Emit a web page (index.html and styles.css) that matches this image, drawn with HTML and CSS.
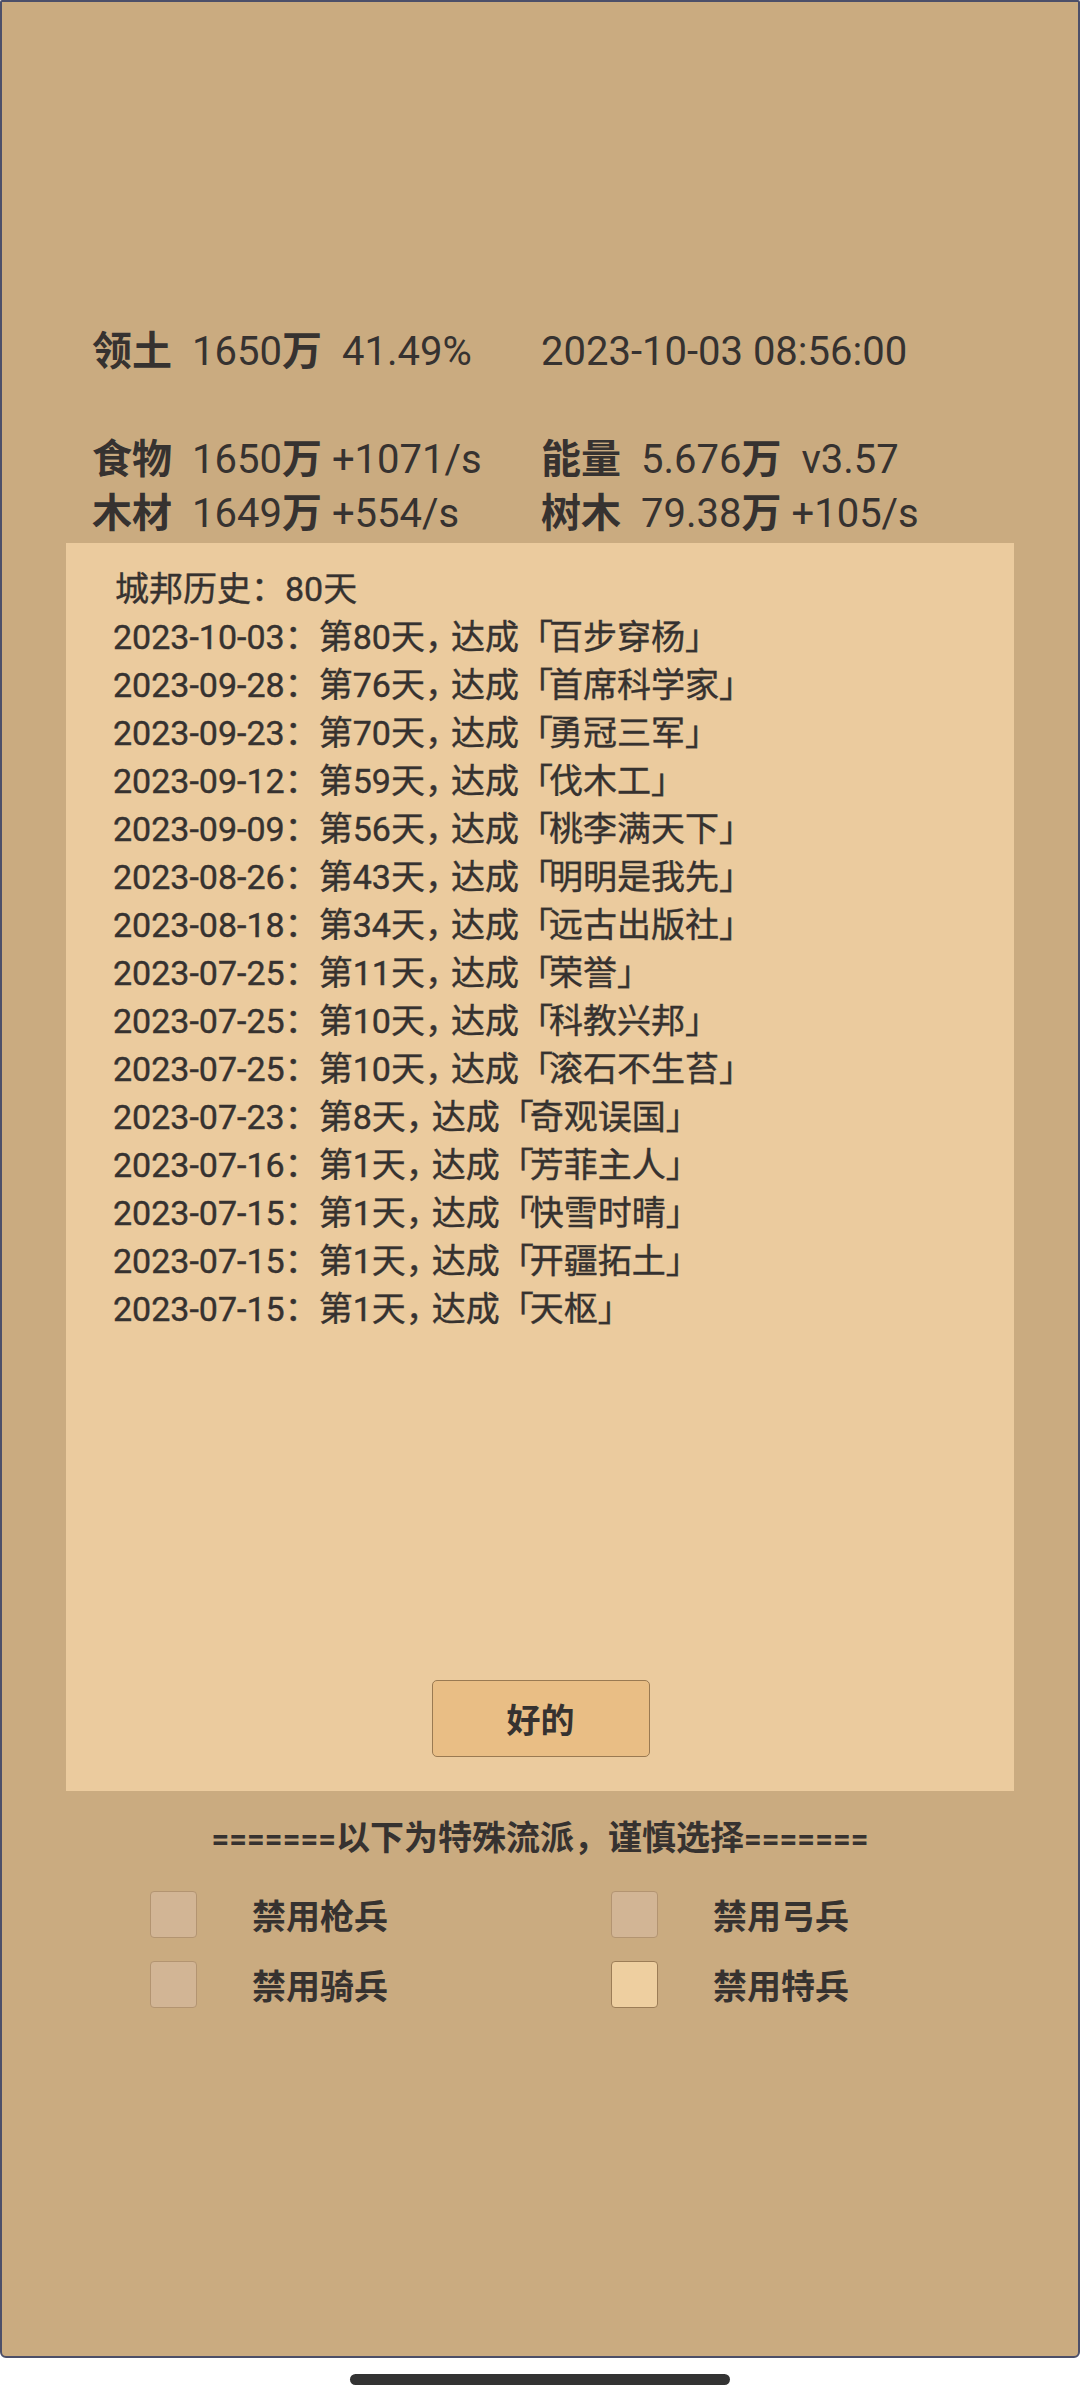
FILE: index.html
```html
<!DOCTYPE html>
<html lang="zh-CN">
<head>
<meta charset="utf-8">
<title>城邦</title>
<link rel="stylesheet" href="styles.css">
</head>
<body>
<div class="screen">
  <div class="frame">
    <div class="stats">
      <div class="row">
        <div class="cell"><span class="lbl">领土</span><span class="val">1650<span class="u">万</span></span><span class="ext wide">41.49%</span></div>
        <div class="cell"><span class="date">2023-10-03 08:56:00</span></div>
      </div>
      <div class="row empty"></div>
      <div class="row">
        <div class="cell"><span class="lbl">食物</span><span class="val">1650<span class="u">万</span></span><span class="ext">+1071/s</span></div>
        <div class="cell"><span class="lbl">能量</span><span class="val">5.676<span class="u">万</span></span><span class="ext wide">v3.57</span></div>
      </div>
      <div class="row">
        <div class="cell"><span class="lbl">木材</span><span class="val">1649<span class="u">万</span></span><span class="ext">+554/s</span></div>
        <div class="cell"><span class="lbl">树木</span><span class="val">79.38<span class="u">万</span></span><span class="ext">+105/s</span></div>
      </div>
    </div>

    <div class="panel">
      <div class="history">
        <div class="line head">城邦历史：80天</div>
        <div class="line">2023-10-03：第80天<span class="cm">，</span>达成<span class="bo">「</span>百步穿杨<span class="bc">」</span></div>
        <div class="line">2023-09-28：第76天<span class="cm">，</span>达成<span class="bo">「</span>首席科学家<span class="bc">」</span></div>
        <div class="line">2023-09-23：第70天<span class="cm">，</span>达成<span class="bo">「</span>勇冠三军<span class="bc">」</span></div>
        <div class="line">2023-09-12：第59天<span class="cm">，</span>达成<span class="bo">「</span>伐木工<span class="bc">」</span></div>
        <div class="line">2023-09-09：第56天<span class="cm">，</span>达成<span class="bo">「</span>桃李满天下<span class="bc">」</span></div>
        <div class="line">2023-08-26：第43天<span class="cm">，</span>达成<span class="bo">「</span>明明是我先<span class="bc">」</span></div>
        <div class="line">2023-08-18：第34天<span class="cm">，</span>达成<span class="bo">「</span>远古出版社<span class="bc">」</span></div>
        <div class="line">2023-07-25：第11天<span class="cm">，</span>达成<span class="bo">「</span>荣誉<span class="bc">」</span></div>
        <div class="line">2023-07-25：第10天<span class="cm">，</span>达成<span class="bo">「</span>科教兴邦<span class="bc">」</span></div>
        <div class="line">2023-07-25：第10天<span class="cm">，</span>达成<span class="bo">「</span>滚石不生苔<span class="bc">」</span></div>
        <div class="line">2023-07-23：第8天<span class="cm">，</span>达成<span class="bo">「</span>奇观误国<span class="bc">」</span></div>
        <div class="line">2023-07-16：第1天<span class="cm">，</span>达成<span class="bo">「</span>芳菲主人<span class="bc">」</span></div>
        <div class="line">2023-07-15：第1天<span class="cm">，</span>达成<span class="bo">「</span>快雪时晴<span class="bc">」</span></div>
        <div class="line">2023-07-15：第1天<span class="cm">，</span>达成<span class="bo">「</span>开疆拓土<span class="bc">」</span></div>
        <div class="line">2023-07-15：第1天<span class="cm">，</span>达成<span class="bo">「</span>天枢<span class="bc">」</span></div>
      </div>
      <button class="ok">好的</button>
    </div>

    <div class="sep"><span class="eq">=======</span>以下为特殊流派，谨慎选择<span class="eq">=======</span></div>

    <div class="opts">
      <div class="opt"><span class="box"></span><span class="olbl">禁用枪兵</span></div>
      <div class="opt"><span class="box"></span><span class="olbl">禁用弓兵</span></div>
      <div class="opt"><span class="box"></span><span class="olbl">禁用骑兵</span></div>
      <div class="opt"><span class="box on"></span><span class="olbl">禁用特兵</span></div>
    </div>
  </div>
  <div class="navbar"><span class="home"></span></div>
</div>
</body>
</html>
```

FILE: styles.css
```css
html, body {
  margin: 0;
  padding: 0;
  background: #ffffff;
}

.screen {
  width: 1080px;
  height: 2400px;
  display: flex;
  flex-direction: column;
  font-family: Roboto, "Noto Sans CJK SC", sans-serif;
  color: #363230;
}

.frame {
  box-sizing: border-box;
  height: 2358px;
  background: #caab80;
  border: 2px solid #4c4f69;
  border-radius: 2px 2px 6px 6px;
  display: flex;
  flex-direction: column;
}

.stats {
  padding: 323px 0 0 90px;
  font-size: 40px;
  line-height: 54px;
}

.row {
  display: grid;
  grid-template-columns: 449px 1fr;
  height: 54px;
  white-space: nowrap;
}

.lbl {
  display: inline-block;
  width: 100px;
  font-weight: 700;
}

.u {
  font-weight: 700;
}

.ext {
  margin-left: 10px;
}

.ext.wide {
  margin-left: 20px;
}

.panel {
  box-sizing: border-box;
  height: 1248px;
  margin: 2px 64px 0;
  background: #ebcb9e;
  padding: 22px 0 34px 47px;
  display: flex;
  flex-direction: column;
}

.history {
  font-size: 34px;
  line-height: 48px;
  white-space: nowrap;
  -webkit-text-stroke: 0.4px #363230;
}

.line {
  height: 48px;
}

.line.head {
  padding-left: 2px;
}

.cm {
  letter-spacing: -8px;
}

.bo,
.bc {
  font-family: "Noto Sans CJK JP", sans-serif;
  line-height: 0;
}

.bo {
  letter-spacing: -4px;
}

.ok {
  margin: auto auto 0;
  width: 218px;
  height: 77px;
  box-sizing: border-box;
  background: #e9be85;
  border: 1.5px solid #9a7a52;
  border-radius: 5px;
  font-family: "Noto Sans CJK SC", sans-serif;
  font-weight: 700;
  font-size: 34px;
  color: #363230;
  padding: 0;
  position: relative;
  left: -23px;
}

.sep {
  margin-top: 20px;
  height: 50px;
  text-align: center;
  font-family: "Noto Sans CJK SC", sans-serif;
  font-weight: 700;
  font-size: 34px;
  line-height: 50px;
}

.eq {
  font-family: Roboto, sans-serif;
  font-size: 31px;
  line-height: 0;
}

.opts {
  margin-top: 18px;
  padding-left: 148px;
  display: grid;
  grid-template-columns: 461px 461px;
  grid-auto-rows: 70px;
}

.opt {
  display: flex;
  align-items: center;
}

.box {
  box-sizing: border-box;
  width: 47px;
  height: 47px;
  background: #d2b595;
  border: 1.5px solid #b39471;
  border-radius: 4px;
  margin-right: 55px;
}

.box.on {
  background: #eecfa0;
  border-color: #9c7d57;
}

.olbl {
  font-family: "Noto Sans CJK SC", sans-serif;
  font-weight: 700;
  font-size: 34px;
}

.navbar {
  flex: 1;
  display: flex;
  justify-content: center;
  padding-top: 16px;
}

.home {
  width: 380px;
  height: 11px;
  border-radius: 6px;
  background: #333333;
}
```
